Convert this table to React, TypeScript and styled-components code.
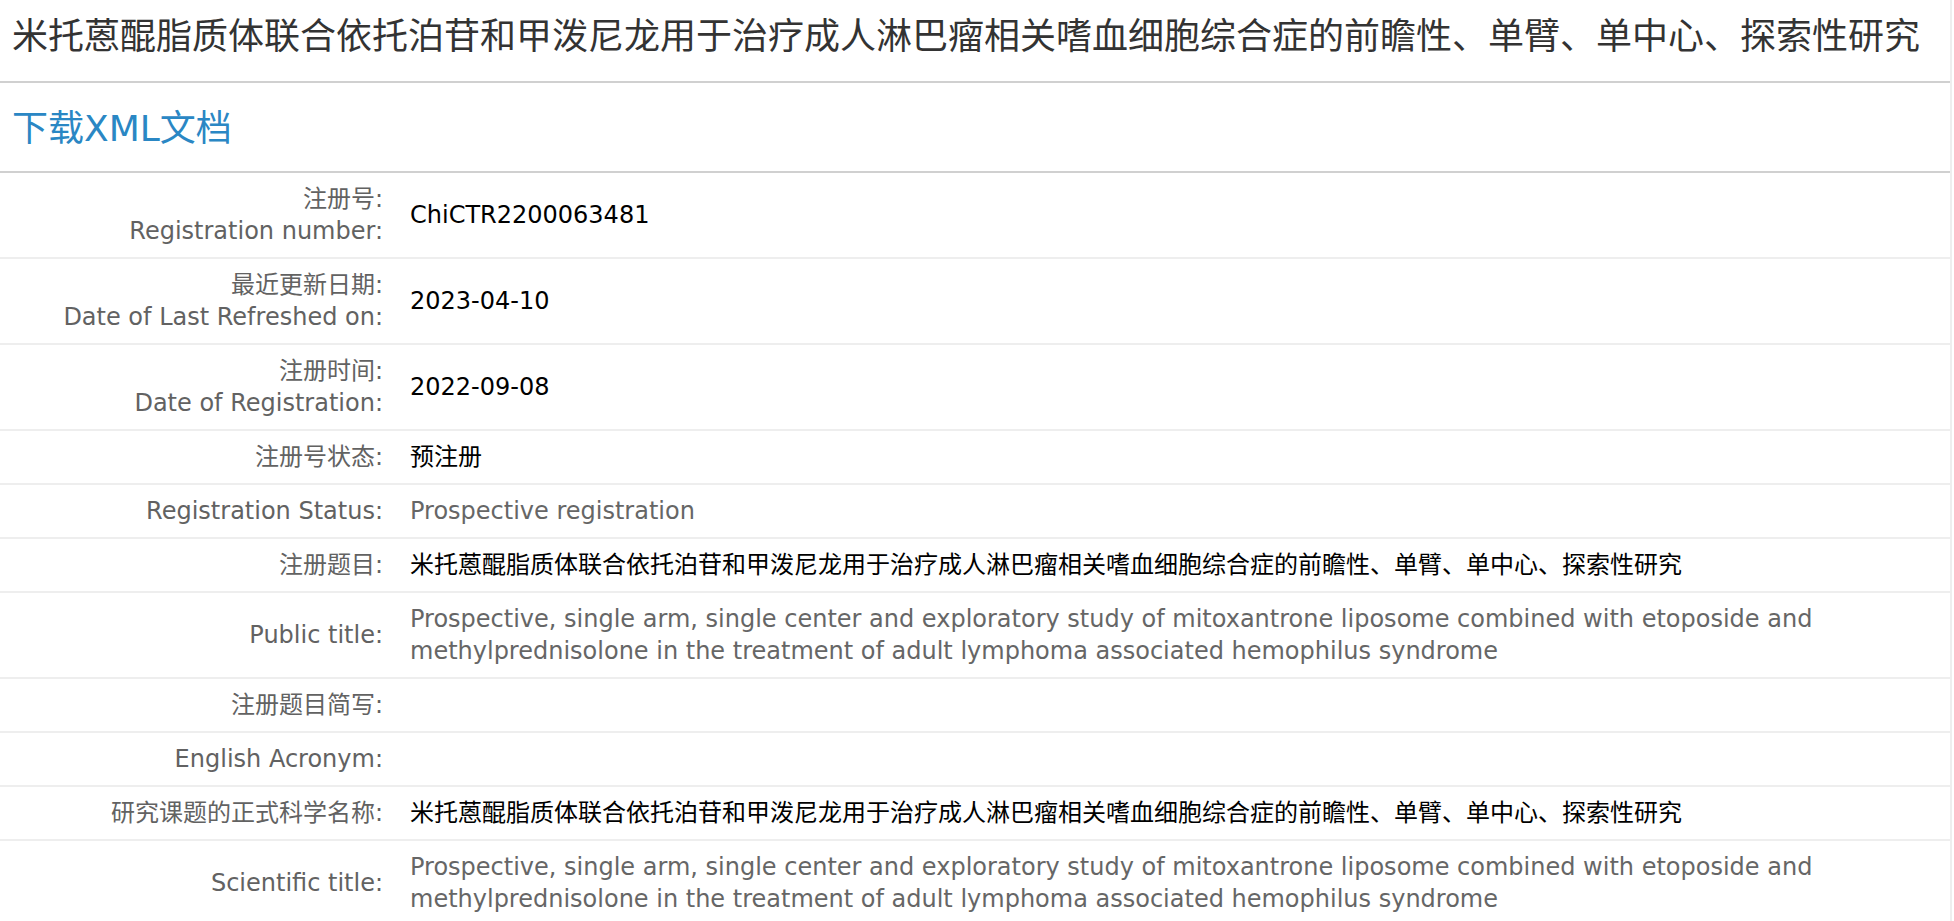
import styled, { createGlobalStyle } from "styled-components";

const GlobalStyle = createGlobalStyle`
  html, body {
    margin: 0;
    padding: 0;
    background: #fff;
  }
  body {
    font-family: "DejaVu Sans", "Noto Sans CJK SC", sans-serif;
  }
`;

const Page = styled.div`
  width: 1952px;
  box-sizing: border-box;
  border-right: 2px solid #eeeeee;
  min-height: 921px;
`;

const Title = styled.h1`
  margin: 0;
  padding: 15px 12px 22px;
  font-size: 36px;
  line-height: 44px;
  font-weight: normal;
  color: #333;
  border-bottom: 2px solid #d0d0d0;
  white-space: nowrap;
`;

const Download = styled.div`
  padding: 24px 12px 20px;
  border-bottom: 2px solid #d0d0d0;
`;

const DownloadLink = styled.a`
  font-size: 36px;
  line-height: 44px;
  color: #2a87c4;
  text-decoration: none;
  cursor: pointer;
`;

const Table = styled.div`
  display: flex;
  flex-direction: column;
`;

const Row = styled.div`
  display: grid;
  grid-template-columns: 383px 1fr;
  column-gap: 27px;
  align-items: center;
  padding: 10px 0;
  border-bottom: 2px solid #eeeeee;
  min-height: 32px;
`;

const Label = styled.div`
  text-align: right;
  font-size: 24px;
  line-height: 32px;
  color: #626262;
`;

const Value = styled.div<{ $muted?: boolean }>`
  font-size: 24px;
  line-height: 32px;
  color: ${(p) => (p.$muted ? "#666" : "#000")};
  padding-right: 20px;
`;

const zhTitle =
  "米托蒽醌脂质体联合依托泊苷和甲泼尼龙用于治疗成人淋巴瘤相关嗜血细胞综合症的前瞻性、单臂、单中心、探索性研究";
const enTitle =
  "Prospective, single arm, single center and exploratory study of mitoxantrone liposome combined with etoposide and methylprednisolone in the treatment of adult lymphoma associated hemophilus syndrome";

interface RowData {
  label: string[];
  value: string;
  muted?: boolean;
}

const rows: RowData[] = [
  { label: ["注册号:", "Registration number:"], value: "ChiCTR2200063481" },
  { label: ["最近更新日期:", "Date of Last Refreshed on:"], value: "2023-04-10" },
  { label: ["注册时间:", "Date of Registration:"], value: "2022-09-08" },
  { label: ["注册号状态:"], value: "预注册" },
  { label: ["Registration Status:"], value: "Prospective registration", muted: true },
  { label: ["注册题目:"], value: zhTitle },
  { label: ["Public title:"], value: enTitle, muted: true },
  { label: ["注册题目简写:"], value: "" },
  { label: ["English Acronym:"], value: "" },
  { label: ["研究课题的正式科学名称:"], value: zhTitle },
  { label: ["Scientific title:"], value: enTitle, muted: true },
];

export default function App() {
  return (
    <Page>
      <GlobalStyle />
      <Title>{zhTitle}</Title>
      <Download>
        <DownloadLink>下载XML文档</DownloadLink>
      </Download>
      <Table>
        {rows.map((r, i) => (
          <Row key={i}>
            <Label>
              {r.label.map((l, j) => (
                <div key={j}>{l}</div>
              ))}
            </Label>
            <Value $muted={r.muted}>{r.value}</Value>
          </Row>
        ))}
      </Table>
    </Page>
  );
}
